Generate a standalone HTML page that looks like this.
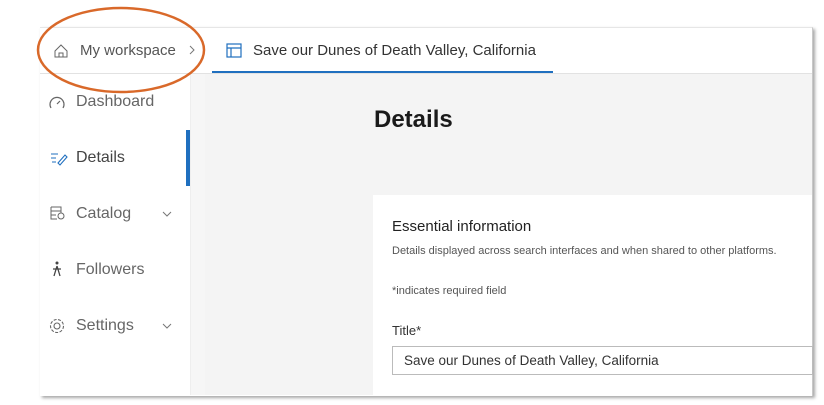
<!DOCTYPE html>
<html><head><style>
body{margin:0;width:824px;height:405px;background:#fff;position:relative;overflow:hidden;font-family:"Liberation Sans",sans-serif;color:#4a4a4a}
.a{position:absolute}
</style></head><body>
<div class="a" style="left:40px;top:27px;width:772px;height:368px;border-top:1px solid #e6e6e6;border-right:1px solid #c8c8c8;box-shadow:2px 2px 3px rgba(0,0,0,.35);background:#fff"></div>
<div class="a" style="left:40px;top:73px;width:772px;height:1px;background:#e2e2e2"></div>
<div class="a" style="left:190px;top:74px;width:14px;height:321px;background:#f6f6f6;border-left:1px solid #eee;border-right:1px solid #ddd"></div>
<div class="a" style="left:205px;top:74px;width:607px;height:321px;background:#f4f4f4"></div>
<div class="a" style="left:373px;top:195px;width:439px;height:200px;background:#fff"></div>
<div class="a" style="left:186px;top:130px;width:4px;height:56px;background:#1f6fbf"></div>
<div class="a" style="left:212px;top:71px;width:341px;height:2px;background:#1f6fbf"></div>
<svg class="a" style="left:0;top:0" width="824" height="405">
<ellipse cx="121" cy="50" rx="83" ry="42" fill="none" stroke="#d9692a" stroke-width="2.5"/>
<path d="M55 51 L61 45 L67 51 V57 H55 Z M59 57 V53 H63 V57" fill="none" stroke="#666" stroke-width="1"/>
<path d="M190 46 l4 4 -4 4" fill="none" stroke="#777" stroke-width="1"/>
<rect x="227" y="44" width="14" height="13" fill="none" stroke="#1f6fbf" stroke-width="1.2"/><path d="M227 48h14M231 48v9" stroke="#1f6fbf" stroke-width="1.2"/>
<path d="M51 108 a7 7 0 1 1 12 0" fill="none" stroke="#666" stroke-width="1.2"/><path d="M57 104 l3 -3" stroke="#666" stroke-width="1.2"/>
<path d="M51 154h7M51 158h5M52 162h4M58 163 l7 -8 2 2 -7 8z" fill="none" stroke="#1f6fbf" stroke-width="1.1"/>
<path d="M51 207h10v6M51 207v12h6M51 211h10M51 215h5" fill="none" stroke="#666" stroke-width="1"/><circle cx="61" cy="216" r="3" fill="none" stroke="#666"/>
<circle cx="57" cy="263" r="1.5" fill="#444"/><path d="M57 266 l-3 10M57 266 l3 10M53 269h8" stroke="#444" stroke-width="1.3"/>
<circle cx="57" cy="326" r="3" fill="none" stroke="#666" stroke-width="1.1"/><circle cx="57" cy="326" r="6.5" fill="none" stroke="#666" stroke-width="1.1" stroke-dasharray="3 1.5"/>
<path d="M163 212 l4 4 4-4M163 324 l4 4 4-4" fill="none" stroke="#777" stroke-width="1"/>
</svg>
<div class="a" style="left:80px;top:42px;font-size:15px;color:#555">My workspace</div>
<div class="a" style="left:253px;top:42px;font-size:15px;color:#333">Save our Dunes of Death Valley, California</div>
<div class="a" style="left:76px;top:93px;font-size:16px;color:#666">Dashboard</div>
<div class="a" style="left:76px;top:149px;font-size:16px;color:#444">Details</div>
<div class="a" style="left:76px;top:205px;font-size:16px;color:#666">Catalog</div>
<div class="a" style="left:76px;top:261px;font-size:16px;color:#666">Followers</div>
<div class="a" style="left:76px;top:317px;font-size:16px;color:#666">Settings</div>
<div class="a" style="left:374px;top:106px;font-size:24px;font-weight:bold;color:#1a1a1a">Details</div>
<div class="a" style="left:392px;top:218px;font-size:15px;color:#222">Essential information</div>
<div class="a" style="left:392px;top:245px;font-size:11px;color:#555">Details displayed across search interfaces and when shared to other platforms.</div>
<div class="a" style="left:392px;top:285px;font-size:11px;color:#555">*indicates required field</div>
<div class="a" style="left:392px;top:323px;font-size:13px;color:#333">Title*</div>
<div class="a" style="left:392px;top:346px;width:421px;height:29px;border:1px solid #bbb;box-sizing:border-box;background:#fff"></div>
<div class="a" style="left:404px;top:353px;font-size:13.5px;color:#333">Save our Dunes of Death Valley, California</div>
</body></html>
